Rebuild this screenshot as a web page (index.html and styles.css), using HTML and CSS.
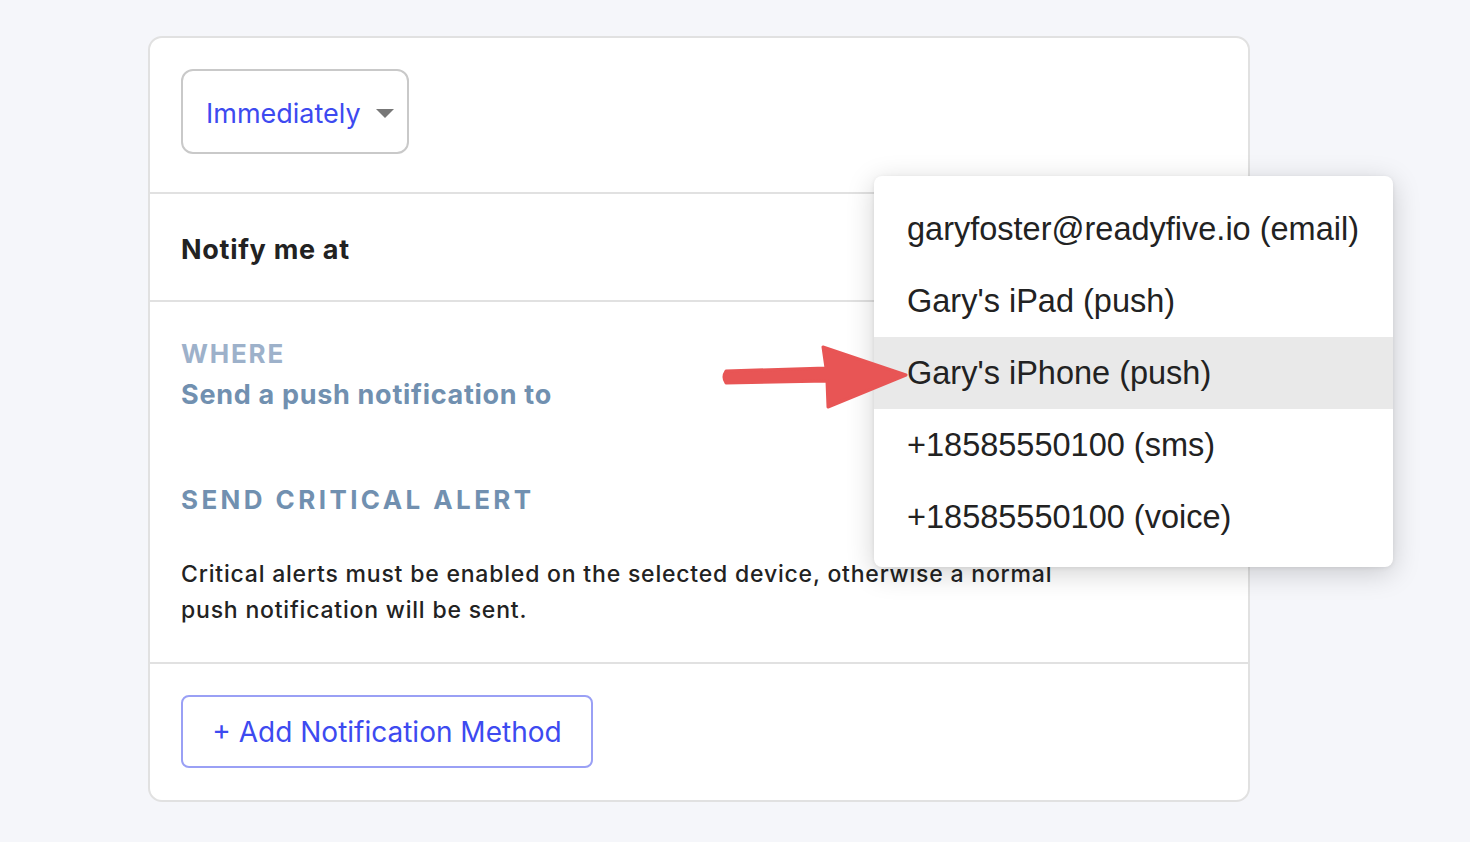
FILE: index.html
```html
<!DOCTYPE html>
<html lang="en">
<head>
    <meta charset="UTF-8">
    <title>Notification rule</title>
    <link rel="stylesheet" href="styles.css">
</head>
<body>
    <div class="page">
        <div class="card">
            <div class="section top">
                <div class="select">
                    <span>Immediately</span>
                    <span class="caret"></span>
                </div>
            </div>

            <div class="section notify">
                <h3>Notify me at</h3>
            </div>

            <div class="section where">
                <div class="label">WHERE</div>
                <div class="sub">Send a push notification to</div>

                <div class="critical">SEND CRITICAL ALERT</div>
                <p class="note">Critical alerts must be enabled on the selected device, otherwise a normal push notification will be sent.</p>
            </div>

            <div class="section bottom">
                <button type="button" class="add">+ Add Notification Method</button>
            </div>

            <!-- open device menu -->
            <ul class="menu">
                <li>garyfoster@readyfive.io (email)</li>
                <li>Gary's iPad (push)</li>
                <li class="active">Gary's iPhone (push)</li>
                <li>+18585550100 (sms)</li>
                <li>+18585550100 (voice)</li>
            </ul>

            <svg class="arrow" width="190" height="70" viewBox="0 0 190 70">
                <path d="M4 32 L104 29 L101 8 L184 36 L106 68 L105 42 L4 44 Q0 38 4 32 Z" fill="#e85555" stroke="#e85555" stroke-width="3" stroke-linejoin="round"/>
            </svg>
        </div>
    </div>
</body>
</html>
```

FILE: styles.css
```css
body {
    margin: 0;
    background-color: #f5f6fa;
    font-family: Inter, "Noto Sans", sans-serif;
}
.page {
    padding: 36px 0 40px 148px;
}
.card {
    position: relative;
    width: 1098px;
    background: white;
    border: 2px solid #e1e1e1;
    border-radius: 14px;
}
.section {
    padding: 0 31px;
}
.section + .section {
    border-top: 2px solid #e1e1e1;
}
.top {
    padding-top: 31px;
    padding-bottom: 38px;
}
.select {
    display: flex;
    align-items: center;
    justify-content: space-between;
    box-sizing: border-box;
    width: 228px;
    height: 85px;
    padding: 3px 13px 0 23px;
    border: 2px solid #c9c9c9;
    border-radius: 12px;
    color: #3d4af0;
    font-size: 27px;
}
.caret {
    width: 0;
    height: 0;
    border-left: 9px solid transparent;
    border-right: 9px solid transparent;
    border-top: 9px solid #777;
}
.notify {
    height: 106px;
    display: flex;
    align-items: center;
}
.notify h3 {
    margin: 4px 0 0;
    font-size: 27px;
    font-weight: 700;
    letter-spacing: 0.7px;
    color: #222;
}
.where {
    padding-top: 36px;
    padding-bottom: 34px;
}
.label {
    font-size: 26px;
    font-weight: 700;
    color: #9db1ca;
    letter-spacing: 1.8px;
    line-height: 32px;
}
.sub {
    margin-top: 8px;
    font-size: 27px;
    font-weight: 700;
    color: #7190b0;
    letter-spacing: 0.7px;
    line-height: 34px;
}
.critical {
    margin-top: 72px;
    font-size: 26px;
    font-weight: 700;
    color: #7190b0;
    letter-spacing: 3.4px;
    line-height: 32px;
}
.note {
    margin: 40px 0 0;
    max-width: 900px;
    font-size: 23px;
    font-weight: 500;
    letter-spacing: 0.8px;
    color: #222;
    line-height: 36px;
}
.bottom {
    padding-top: 31px;
    padding-bottom: 32px;
}
.add {
    box-sizing: border-box;
    width: 412px;
    height: 73px;
    background: white;
    border: 2px solid #9aa0f5;
    border-radius: 8px;
    color: #3d4af0;
    font-family: Inter, "Noto Sans", sans-serif;
    font-size: 28px;
    cursor: pointer;
}
.menu {
    position: absolute;
    left: 724px;
    top: 138px;
    width: 519px;
    margin: 0;
    padding: 17px 0 14px;
    list-style: none;
    background: white;
    border-radius: 8px;
    box-shadow: 0 6px 28px rgba(0,0,0,0.18), 0 1px 4px rgba(0,0,0,0.08);
    font-family: "Liberation Sans", Arial, sans-serif;
    font-size: 32.5px;
    color: #222;
}
.menu li {
    height: 72px;
    line-height: 72px;
    padding-left: 33px;
}
.menu li.active {
    background: #e9e9e9;
}
.arrow {
    position: absolute;
    left: 572px;
    top: 301px;
}
```
